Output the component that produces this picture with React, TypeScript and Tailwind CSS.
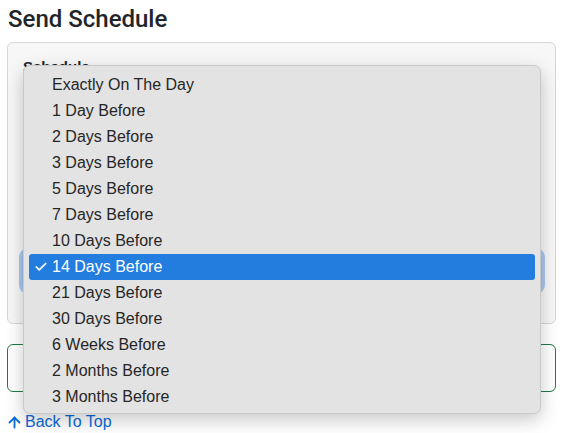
import { ArrowUp, Check } from "lucide-react";

const options = [
  "Exactly On The Day",
  "1 Day Before",
  "2 Days Before",
  "3 Days Before",
  "5 Days Before",
  "7 Days Before",
  "10 Days Before",
  "14 Days Before",
  "21 Days Before",
  "30 Days Before",
  "6 Weeks Before",
  "2 Months Before",
  "3 Months Before",
];

const selected = "14 Days Before";

const App = () => {
  return (
    <div className="relative w-[566px] h-[433px] bg-white overflow-hidden font-['Liberation_Sans',sans-serif] text-[#212529]">
      <h2 className="px-[8px] pt-[5px] font-['Roboto',sans-serif] text-[24px] leading-[28px] font-medium">Send Schedule</h2>

      <div className="ml-[7px] mr-[10px] mt-[9px] h-[282px] rounded-[6px] border border-[#d6d6d6] bg-[#f7f7f7] px-[15px] pt-[14px]">
        <div className="text-[15px] font-bold leading-[20px]">Schedule</div>
        <div className="mr-[-2px] ml-[-1px] mt-[174px] h-[40px] rounded-[6px] border border-[#9fc0ea] bg-white shadow-[0_0_0_3px_#a9c8ef]" />
      </div>

      <div className="ml-[7px] mr-[10px] mt-[20px] h-[48px] rounded-[6px] border border-[#1e7a4a] bg-white" />

      <a className="mt-[18px] flex items-center gap-[2px] px-[6px] text-[16px] text-[#0a6ad9]">
        <ArrowUp size={17} strokeWidth={2.6} />
        Back To Top
      </a>

      <div className="absolute left-[23px] top-[65px] w-[518px] rounded-[7px] border border-[#c9c9c9] bg-[#e3e3e3] px-[5px] pt-[6px] pb-[3px] shadow-[0_6px_18px_rgba(0,0,0,0.22)]">
        {options.map((o) => {
          const on = o === selected;
          return (
            <div
              key={o}
              className={
                on
                  ? "flex h-[26px] items-center rounded-[3px] bg-[#237ddf] text-[16px] text-white"
                  : "flex h-[26px] items-center text-[16px] text-[#262626]"
              }
            >
              <span className="flex w-[23px] justify-end pr-[4px]">
                {on && <Check size={14} strokeWidth={3} />}
              </span>
              {o}
            </div>
          );
        })}
      </div>
    </div>
  );
};

export default App;
